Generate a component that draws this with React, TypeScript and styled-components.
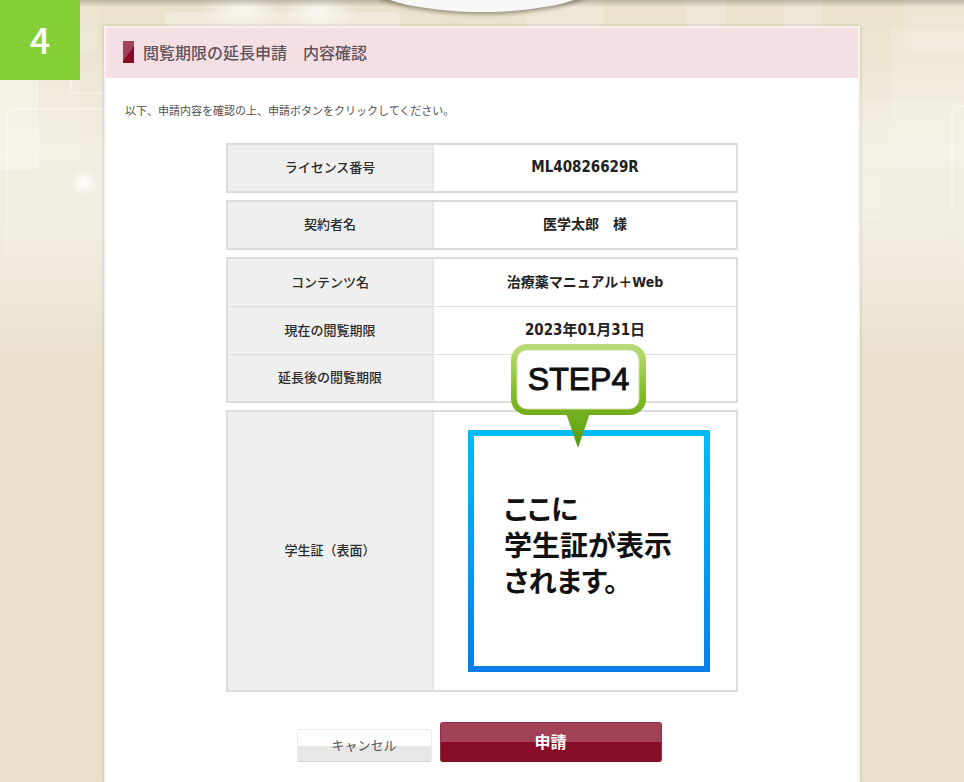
import React from "react";
import styled, { createGlobalStyle } from "styled-components";

const GlobalStyle = createGlobalStyle`
  *, *::before, *::after { box-sizing: border-box; }
  body {
    margin: 0;
    background: #e8e0cd;
    color: #2b2b2b;
    font-family: "Noto Sans CJK JP", sans-serif;
  }
`;

const Page = styled.div`
  position: relative;
  display: flex;
  flex-direction: column;
  min-height: 100vh;
  padding-top: 26px;
  background: linear-gradient(
    #e9e1ca 0,
    #ede6d4 70px,
    #f2eee2 150px,
    #f1ede2 230px,
    #efe7d8 290px,
    #e9e1ce 350px,
    #e8e0cd 420px
  );
`;

const Backdrop = styled.svg`
  position: absolute;
  top: 0;
  left: 0;
  width: 100%;
  height: 400px;
`;

const StepNumber = styled.div`
  position: absolute;
  top: 0;
  left: 0;
  width: 80px;
  height: 80px;
  background: #84cf36;
  color: #fff;
  font-size: 36px;
  font-weight: 500;
  line-height: 76px;
  text-align: center;
`;

const Panel = styled.main`
  position: relative;
  flex: 1;
  display: flex;
  flex-direction: column;
  width: calc(100% - 32px);
  max-width: 756px;
  margin: 0 auto;
  padding-bottom: 20px;
  border: 2px solid #f6f3ef;
  border-bottom: 0;
  background: #fff;
  box-shadow: 0 0 3px rgba(120, 105, 70, 0.35);
`;

const PanelHeader = styled.header`
  display: flex;
  align-items: center;
  gap: 9px;
  height: 50px;
  padding: 0 17px 2px;
  background: #f4dfe4;
`;

const Marker = styled.svg`
  width: 11px;
  height: 22px;
`;

const Title = styled.h1`
  margin: 0;
  color: #60545a;
  font-size: 16px;
  font-weight: 500;
  line-height: 22px;
`;

const Intro = styled.p`
  margin: 24px 19px;
  color: #505050;
  font-size: 11px;
  line-height: 17px;
`;

const Form = styled.form`
  display: flex;
  flex-direction: column;
  gap: 7px;
  width: 100%;
  max-width: 512px;
  margin: 0 auto;
`;

const Table = styled.table`
  width: 100%;
  table-layout: fixed;
  border: 2px solid #dcdcdc;
  border-spacing: 0;
  border-collapse: separate;
`;

const Row = styled.tr`
  height: 46px;
  &:not(:last-child) { height: 48px; }
  &:not(:last-child) > * { border-bottom: 1px solid #dedede; }
`;

const Label = styled.th`
  width: 206px;
  padding: 0 0 2px;
  border-right: 2px solid #e6e6e6;
  background: #efefef;
  font-size: 13px;
  font-weight: 500;
  line-height: 20px;
`;

const Value = styled.td<{ $size?: number }>`
  padding: 0 0 2px;
  color: #222;
  font-family: "DejaVu Sans Condensed", "Noto Sans CJK JP", sans-serif;
  font-size: ${(p) => p.$size ?? 14}px;
  font-weight: 700;
  line-height: 20px;
  text-align: center;
`;

const CardCell = styled.td`
  padding: 18px 0 18px 34px;
`;

const CardFrame = styled.div`
  position: relative;
  width: 242px;
  height: 242px;
  padding: 6px;
  background: linear-gradient(#00bcf6, #0a7ee8);
`;

const CardText = styled.p`
  display: flex;
  align-items: center;
  height: 100%;
  margin: 0;
  padding: 0 0 14px 30px;
  background: #fff;
  color: #111;
  font-size: 28px;
  font-weight: 700;
  font-feature-settings: "palt";
  line-height: 36px;
  white-space: pre-line;
`;

const Callout = styled.div`
  position: absolute;
  top: -86px;
  left: 43px;
  width: 135px;
  height: 104px;
`;

const CalloutShape = styled.svg`
  display: block;
  width: 100%;
  height: 100%;
`;

const CalloutText = styled.span`
  position: absolute;
  top: 0;
  left: 0;
  width: 100%;
  color: #111;
  font-family: "Liberation Sans", sans-serif;
  font-size: 32px;
  font-weight: 400;
  line-height: 71px;
  text-align: center;
  -webkit-text-stroke: 1px #111;
`;

const Actions = styled.div`
  display: flex;
  justify-content: center;
  align-items: flex-end;
  gap: 8px;
  margin-top: 23px;
  padding-right: 6px;
`;

const Button = styled.button<{ $primary?: boolean }>`
  width: ${(p) => (p.$primary ? 222 : 135)}px;
  height: ${(p) => (p.$primary ? 40 : 33)}px;
  padding: 0 0 2px;
  border: 1px solid ${(p) => (p.$primary ? "#8f3048" : "#ececec")};
  border-bottom-color: ${(p) => (p.$primary ? "#780b22" : "#d2d2d2")};
  border-radius: 3px;
  background: ${(p) =>
    p.$primary
      ? "linear-gradient(#a14259 0 50%, #870c28 50%)"
      : "linear-gradient(#fff 0 50%, #e7e7e7 50%)"};
  color: ${(p) => (p.$primary ? "#fff" : "#555")};
  font-family: inherit;
  font-size: ${(p) => (p.$primary ? 16 : 13)}px;
  font-weight: ${(p) => (p.$primary ? 700 : 400)};
  line-height: 24px;
`;

type Entry = { label: string; value: string; size?: number };

const groups: Entry[][] = [
  [{ label: "ライセンス番号", value: "ML40826629R", size: 15 }],
  [{ label: "契約者名", value: "医学太郎　様" }],
  [
    { label: "コンテンツ名", value: "治療薬マニュアル＋Web" },
    { label: "現在の閲覧期限", value: "2023年01月31日", size: 15 },
    { label: "延長後の閲覧期限", value: "" },
  ],
];

function PageBackdrop() {
  return (
    <Backdrop viewBox="0 0 964 400" preserveAspectRatio="xMidYMin slice" aria-hidden="true">
      <defs>
        <linearGradient id="topShade" x1="0" y1="0" x2="0" y2="1">
          <stop offset="0" stopColor="#8d8775" stopOpacity="0.5" />
          <stop offset="1" stopColor="#8d8775" stopOpacity="0" />
        </linearGradient>
        <linearGradient id="fade" x1="0" y1="0" x2="0" y2="1">
          <stop offset="0" stopColor="#fff" stopOpacity="0.4" />
          <stop offset="1" stopColor="#fff" stopOpacity="0" />
        </linearGradient>
        <radialGradient id="glow">
          <stop offset="0" stopColor="#fff" stopOpacity="0.95" />
          <stop offset="1" stopColor="#fff" stopOpacity="0" />
        </radialGradient>
        <filter id="soft" x="-10%" y="-50%" width="120%" height="200%">
          <feGaussianBlur stdDeviation="2" />
        </filter>
      </defs>
      <g fill="#fff">
        <rect x="-20" y="-20" width="58" height="190" rx="5" opacity="0.25" />
        <rect x="-20" y="-20" width="118" height="72" rx="5" opacity="0.12" />
        <rect x="-20" y="50" width="101" height="113" rx="5" opacity="0.12" />
        <rect x="165" y="12" width="235" height="60" rx="5" opacity="0.25" />
        <rect x="527" y="-10" width="77" height="60" opacity="0.2" />
        <rect x="687" y="-10" width="38" height="60" opacity="0.2" />
        <rect x="784" y="-10" width="38" height="60" opacity="0.2" />
        <rect x="905" y="-10" width="80" height="60" rx="3" opacity="0.15" />
        <rect x="890" y="28" width="90" height="136" rx="4" opacity="0.14" />
        <rect x="850" y="100" width="130" height="71" opacity="0.12" />
        <rect x="850" y="175" width="32" height="45" rx="4" opacity="0.13" />
      </g>
      <g fill="none" stroke="#fff" strokeWidth="2">
        <path d="M38 80V163q0 6-6 6H0" opacity="0.2" />
        <path d="M71 80v7q0 6 6 6h40" opacity="0.4" />
        <path d="M120 109H13q-6 0-6 6v45" opacity="0.35" />
        <path d="M964 106h-6q-6 0-6 6v58" opacity="0.35" />
      </g>
      <rect x="6" y="160" width="2" height="130" fill="url(#fade)" />
      <rect x="951" y="170" width="2" height="110" fill="url(#fade)" />
      <circle cx="84" cy="183" r="14" fill="url(#glow)" />
      <ellipse cx="242" cy="8" rx="44" ry="26" fill="url(#glow)" opacity="0.75" />
      <ellipse cx="318" cy="10" rx="40" ry="25" fill="url(#glow)" opacity="0.75" />
      <rect width="964" height="7" fill="url(#topShade)" />
      <ellipse cx="482" cy="-18" rx="120" ry="32" fill="#6d6755" opacity="0.7" filter="url(#soft)" />
      <ellipse cx="482" cy="-20" rx="118" ry="32" fill="#f8f8f8" />
    </Backdrop>
  );
}

function StepCallout() {
  return (
    <Callout>
      <CalloutShape viewBox="0 0 135 104" aria-hidden="true">
        <defs>
          <linearGradient id="rim" x1="0" y1="0" x2="0" y2="1">
            <stop offset="0" stopColor="#b7dc78" />
            <stop offset="0.3" stopColor="#a5d157" />
            <stop offset="0.7" stopColor="#80bd25" />
            <stop offset="1" stopColor="#72ad1d" />
          </linearGradient>
          <linearGradient id="tip" x1="0" y1="0" x2="0" y2="1">
            <stop offset="0" stopColor="#77b321" />
            <stop offset="1" stopColor="#4f9712" />
          </linearGradient>
        </defs>
        <path d="M55 69H79L67 104Z" fill="url(#tip)" />
        <rect width="135" height="71" rx="16" fill="url(#rim)" />
        <rect x="6" y="6" width="122" height="59" rx="10" fill="#fff" stroke="#d6dfa9" />
      </CalloutShape>
      <CalloutText>STEP4</CalloutText>
    </Callout>
  );
}

export default function App() {
  return (
    <>
      <GlobalStyle />
      <Page>
        <PageBackdrop />
        <Panel>
          <PanelHeader>
            <Marker viewBox="0 0 11 22" aria-hidden="true">
              <rect width="11" height="22" fill="#870c28" />
              <path d="M0 0H11V5L0 20Z" fill="#a14259" />
            </Marker>
            <Title>閲覧期限の延長申請　内容確認</Title>
          </PanelHeader>
          <Intro>以下、申請内容を確認の上、申請ボタンをクリックしてください。</Intro>
          <Form onSubmit={(e) => e.preventDefault()}>
            {groups.map((rows) => (
              <Table key={rows[0].label}>
                <tbody>
                  {rows.map((r) => (
                    <Row key={r.label}>
                      <Label scope="row">{r.label}</Label>
                      <Value $size={r.size}>{r.value}</Value>
                    </Row>
                  ))}
                </tbody>
              </Table>
            ))}
            <Table>
              <tbody>
                <Row>
                  <Label scope="row">学生証（表面）</Label>
                  <CardCell>
                    <CardFrame>
                      <CardText>{"ここに\n学生証が表示\nされます。"}</CardText>
                      <StepCallout />
                    </CardFrame>
                  </CardCell>
                </Row>
              </tbody>
            </Table>
            <Actions>
              <Button type="button">キャンセル</Button>
              <Button type="submit" $primary>申請</Button>
            </Actions>
          </Form>
        </Panel>
        <StepNumber>4</StepNumber>
      </Page>
    </>
  );
}
